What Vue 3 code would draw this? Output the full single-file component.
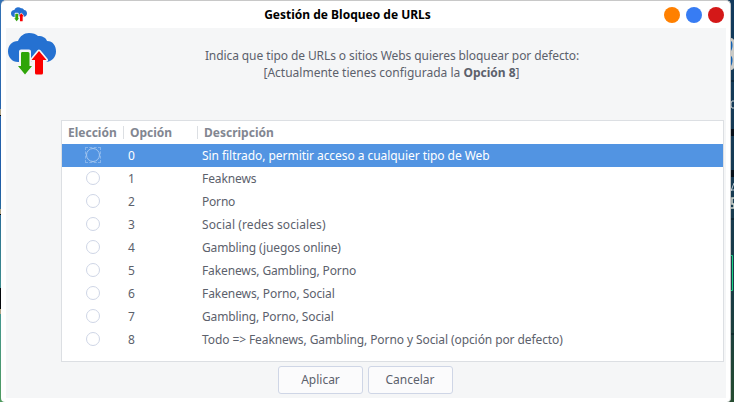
<script setup>
const options = [
  { text: 'Sin filtrado, permitir acceso a cualquier tipo de Web', tracking: -0.055 },
  { text: 'Feaknews', tracking: -0.1 },
  { text: 'Porno', tracking: -0.2 },
  { text: 'Social (redes sociales)', tracking: 0.09 },
  { text: 'Gambling (juegos online)', tracking: -0.12 },
  { text: 'Fakenews, Gambling, Porno', tracking: -0.12 },
  { text: 'Fakenews, Porno, Social', tracking: -0.08 },
  { text: 'Gambling, Porno, Social', tracking: -0.12 },
  { text: 'Todo => Feaknews, Gambling, Porno y Social (opción por defecto)', tracking: -0.09 },
]
</script>

<template>
  <div class="desktop">
    <svg class="wallpaper" width="734" height="402" viewBox="0 0 734 402">
      <path d="M0 109h2v6H0zM0 209h2v5H0zM0 309h2v5H0z" fill="#b3a587" />
      <path d="M0 115h2v1H0zM0 214h2v1H0zM0 288h2v21H0z" fill="#05080c" />
      <path d="M731 38c2 0 3 2 3 2v28c-1 2-3 2-3 2z" fill="#c9c9c5" />
      <path d="M731 41c2 1 2 7 0 10zM731 56c2 1 2 7 0 10z" fill="#1262b4" />
      <path d="M731 81h3M731 219h3M731 334h3" stroke="#071821" />
      <path d="M734 101h-2l-1 2v3l1 2h2" fill="none" stroke="#c8ced0" />
      <path d="M731 129h3v7h-3zM731 170h3v7h-3z" fill="#071019" />
      <path d="M731 191l3-8M731 190h3" stroke="#bdcbd4" fill="none" />
      <path d="M734 198h-2v6h2v4h-3" stroke="#d2d8cf" stroke-width="1.5" fill="none" />
      <path d="M731 255.5h1.5v35H731" stroke="#18d184" fill="none" />
    </svg>
    <main class="window">
      <header class="titlebar">
        <svg class="app-icon" width="16" height="15" viewBox="0 0 48 43">
          <use href="#cloud-sync" />
        </svg>
        <h1>Gestión de Bloqueo de URLs</h1>
        <div class="controls"><i class="min"></i><i class="max"></i><i class="close"></i></div>
      </header>
      <section class="content">
        <div class="intro">
          <svg class="cloud" width="48" height="43" viewBox="0 0 48 43">
            <g id="cloud-sync">
              <path d="M10 29C4 29 0 24 0 18.500C0 12.500 4 8 10 8C12 3 16 0 21 0C25 0 28 1 30 3C35 3 38 5 39 8C45 8 48 13 48 18.500C48 24 44 28 39 29Z" fill="#2571d1" />
              <path d="M13 18.500h8v15h3L17 41 10 33.500h3zM31 18.500l7 8.500h-3v13h-8V27h-3z" fill="#f5f6f7" stroke="#f5f6f7" stroke-width="4" stroke-linejoin="round" />
              <path d="M14 19h6q1.500 0 1.500 1.500V33H24L17 41.500 10 33h3V20.500Q13 19 14 19Z" fill="#2fa509" />
              <path d="M31 18l7.500 9H35v13q0 1.500-1.500 1.500h-5Q27 41.500 27 40V27h-3.500Z" fill="#fb0000" />
            </g>
          </svg>
          <p><span class="line first">Indica que tipo de URLs o sitios Webs quieres bloquear por defecto:</span><span class="line second">[Actualmente tienes configurada la <b>Opción 8</b>]</span></p>
        </div>
        <div class="list">
          <div class="head"><span>Elección</span><span>Opción</span><span>Descripción</span></div>
          <div v-for="(option, i) in options" :key="i" class="row" :class="{ selected: i === 0 }">
            <span class="choice"><i class="radio"></i></span><span>{{ i }}</span><span class="description" :style="{ letterSpacing: option.tracking + 'px' }">{{ option.text }}</span>
          </div>
        </div>
        <footer><button>Aplicar</button><button class="cancel">Cancelar</button></footer>
      </section>
    </main>
  </div>
</template>

<style>
body { margin: 0; overflow: hidden; }
</style>
<style scoped>
* { box-sizing: border-box; }
.desktop { position: relative; width: 734px; height: 402px; padding-left: 1px; overflow: hidden; background: linear-gradient(#123a5c, #173b53 45%, #193c43 75%, #254c30) right / 10px 100% no-repeat, linear-gradient(#3472b5, #1f5ca8 45%, #327b91 60%, #45978c 80%, #4f9a5e); font-family: "Noto Sans", sans-serif; font-size: 12px; color: #5c616c; }
.wallpaper { position: absolute; inset: 0; }
.window { position: relative; width: 730px; height: 402px; padding: 0 4px 4px 5px; background: #fff; border: solid #c8c8c8; border-width: 1px 1px 0 0; border-radius: 5px 5px 4px 4px; }
.titlebar { height: 27px; display: grid; grid-template-columns: 58px 1fr 95px; align-items: center; }
.app-icon { margin-left: 5px; }
h1 { margin: 0; padding-bottom: 1px; text-align: center; font-size: 12px; line-height: 17px; color: #000; }
.controls { display: flex; gap: 6px; justify-content: flex-end; padding-right: 2px; }
.controls i { width: 16px; height: 16px; border-radius: 50%; }
.min { background: #ff8000; } .max { background: #377cf3; } .close { background: #d41818; }
.content { height: 370px; padding: 5px 2px 4px; background: #f5f6f7; }
.intro { height: 87px; display: flex; }
.cloud { flex: none; }
p { width: 575px; margin: 14px 0 0 48px; display: flex; flex-direction: column; align-items: center; line-height: 17px; }
.line { white-space: nowrap; }
.first { letter-spacing: -.09px; padding-left: 1px; }
.list { width: 663px; height: 242px; margin-left: 53px; border: 1px solid #dcdfe3; background: #fff; }
.head, .row { display: grid; grid-template-columns: 61px 74px 1fr; height: 23px; line-height: 24px; }
.head { color: #828691; font-weight: bold; }
.head span { padding-left: 7px; background: linear-gradient(#dcdfe3, #dcdfe3) 0 5px / 1px 13px no-repeat; }
.head span:first-child { padding-left: 6px; background: none; }
.row > span { height: 23px; padding-left: 5px; white-space: nowrap; }
.row > .choice { display: flex; align-items: flex-start; padding: 4px 0 0 24px; }
.radio { width: 14px; height: 14px; border: 1px solid #cfd6e6; border-radius: 50%; background: #fff; }
.selected { background: #5294e2; color: #fff; }
.row.selected > .choice { width: 16px; height: 16px; margin: 3px 22px 4px 23px; padding: 0; border: 1px dashed #86b4eb; }
.selected .radio { background: transparent; border-color: #a9c9f0; }
footer { display: flex; gap: 5px; padding: 4px 0 0 270px; }
button { width: 85px; height: 28px; padding: 0 0 1px; border: 1px solid #cfd6e6; border-radius: 3px; background: #fbfbfc; font: inherit; color: inherit; }
.cancel { padding-right: 1px; }
</style>
